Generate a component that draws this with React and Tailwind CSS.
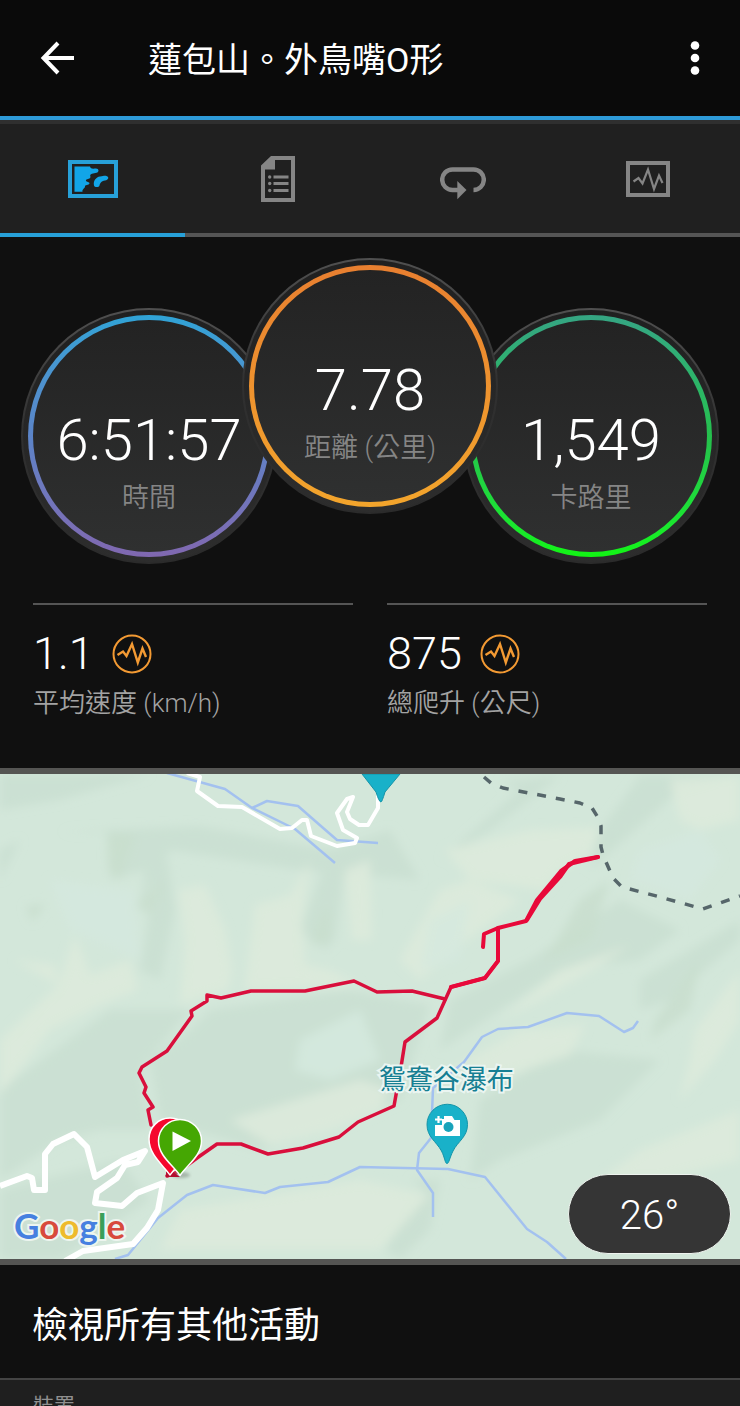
import React from "react";

const PULSE = "7.5,20.5 12.5,17 16.5,22.5 22,8.5 28,28 33,14.5 36.5,22";

function MapIcon() {
  return (
    <svg width="50" height="38" viewBox="0 0 50 38" aria-hidden="true">
      <rect x="2" y="2" width="46" height="34" fill="none" stroke="#27a0d8" strokeWidth="4" />
      <path
        fill="#12a5e8"
        d="M6.5 6.5H22C22.500 9.500 26 8.500 28 8.500C31 8.500 31.500 12 28.500 12.800L24 13.800C20.500 15 23.500 16.500 22 18C20.500 19.500 17.500 19 18 20.800C18.500 22.500 21.500 21.500 21.500 23.500C21 25.500 16.500 24.500 17 26.500C17 28.500 14 29 14.500 31.800H6.500Z"
      />
      <path
        fill="#12a5e8"
        d="M26 25.500C25 21 28 17 32 16.500C35 16.500 36 15.500 38.500 16C41.500 17 40.500 20 37 20.500C33 21 32 23.500 31.500 25.500C31 27.500 26.500 27.500 26 25.500Z"
      />
    </svg>
  );
}

function DocIcon() {
  return (
    <svg width="34" height="46" viewBox="0 0 34 46" fill="#858585" aria-hidden="true">
      <path fillRule="evenodd" d="M10 0H34V46H0V9.500ZM14 4V13.500H4V42H30V4Z" />
      {[21, 27.5, 34.5].map((y) => (
        <g key={y}>
          <circle cx="8.700" cy={y} r="1.700" />
          <rect x="12.500" y={y - 1.5} width="15" height="3" />
        </g>
      ))}
    </svg>
  );
}

function LoopIcon() {
  return (
    <svg width="46" height="42" viewBox="0 -9 46 42" aria-hidden="true">
      <path
        d="M18 23H12.500A10.300 10.300 0 0 1 12.500 2.400H33.500A10.300 10.300 0 0 1 33.500 23"
        fill="none"
        stroke="#858585"
        strokeWidth="4.500"
      />
      <path d="M17.300 14L26.500 23L17.300 32.300Z" fill="#858585" />
    </svg>
  );
}

function ChartIcon() {
  return (
    <svg width="44" height="36" viewBox="0 0 44 36" fill="none" stroke="#858585" aria-hidden="true">
      <rect x="2" y="2" width="40" height="32" strokeWidth="4" />
      <polyline points={PULSE} strokeWidth="2.200" />
    </svg>
  );
}

function PulseBadge() {
  return (
    <svg width="40" height="40" viewBox="0 0 40 40" fill="none" stroke="#f39a33" aria-hidden="true">
      <circle cx="20" cy="20" r="18.500" strokeWidth="2" />
      <polyline
        points="5.500,21 11,17.500 14.500,22 20,10 25.800,28.500 30.500,14.500 34,23"
        strokeWidth="2.400"
      />
    </svg>
  );
}

const TABS = [
  { label: "地圖", Icon: MapIcon },
  { label: "統計資料", Icon: DocIcon },
  { label: "圈數", Icon: LoopIcon },
  { label: "圖表", Icon: ChartIcon },
];

function Dial({ value, label, ring, className }) {
  return (
    <div
      className={`size-64 shrink-0 rounded-full bg-linear-to-b from-[#505050] from-0% via-[#303030] via-50% to-[#2b2b2b] p-[2px] ${className}`}
    >
      <div className="size-full rounded-full bg-linear-to-b from-[#202020] to-[#2d2d2d] p-[5px]">
        <div className={`size-full rounded-full bg-linear-to-b p-[5px] ${ring}`}>
          <div className="flex size-full flex-col items-center rounded-full bg-linear-to-b from-[#232323] to-[#2f3030] pt-[84px]">
            <div className="text-[58px] leading-[72px] font-light whitespace-nowrap text-white">{value}</div>
            <div className="mt-[2px] text-[27px] leading-10 font-[350] whitespace-nowrap text-[#858585]">{label}</div>
          </div>
        </div>
      </div>
    </div>
  );
}

function Stat({ value, label }) {
  return (
    <div className="border-t-2 border-[#555] pt-6">
      <div className="flex items-center gap-[18px]">
        <span className="text-[45px] leading-[50px] font-light text-white">{value}</span>
        <PulseBadge />
      </div>
      <div className="mt-1 text-[26px] leading-10 font-[350] text-[#a3a3a3]">{label}</div>
    </div>
  );
}

function Terrain() {
  return (
    <g>
      <rect x="0" y="774" width="740" height="485" fill="#d3e7da" />
      <g filter="url(#soft)">
        <g fill="#cadfd1" opacity="0.800">
          <path d="M0 774H150L60 800L0 810Z" />
          <path d="M60 832L200 826L330 850L390 830L420 880L300 870L170 850L140 910L145 870L110 880L108 832Z" />
          <path d="M0 850L20 840L0 880Z" />
          <path d="M158 860L140 970L160 980L175 910L168 860Z" />
          <path d="M325 865L300 930L325 950L335 940L345 870Z" />
          <path d="M440 860L520 790L500 782L560 776L490 830Z" />
          <path d="M590 870L680 790L730 776H640L600 830Z" />
          <path d="M210 1010L350 990L430 1005L400 1100L260 1150L160 1120L150 1060L190 1030Z" />
          <path d="M0 1090L110 1010L190 1010L140 1070L150 1130L100 1130L60 1140L0 1180Z" />
          <path d="M0 1190L120 1160L150 1200L60 1259H0Z" />
          <path d="M530 960L620 900L680 930L640 960L560 970L470 1030L440 1050L450 1000Z" />
          <path d="M480 1100L560 1050L660 1060L600 1120L500 1160L470 1180Z" />
          <path d="M640 980L740 920V940L670 1000L640 1010Z" />
          <path d="M385 1250L425 1190L410 1180L440 1180L430 1230L400 1259Z" />
        </g>
        <g fill="#c8decd" opacity="0.800">
          <path d="M107 832L135 835L120 880L108 870Z" />
          <path d="M26 906L46 904L32 922Z" />
          <path d="M135 905L165 880L150 915Z" />
          <path d="M545 960L580 900L610 880L590 940Z" />
          <path d="M320 920L328 905L330 940L310 945Z" />
          <path d="M655 1020L700 960L690 1010L650 1040Z" />
        </g>
        <g fill="#ddebdc" opacity="0.850">
          <path d="M178 890L205 885L225 930L232 970L228 990L180 1005L185 940Z" />
          <path d="M58 985L75 935L90 975L130 960L138 990L100 1005L50 1030L0 1095V1040Z" />
          <path d="M255 905L290 895L310 860L302 920L305 965L330 970L360 985L245 990Z" />
          <path d="M15 960L55 965L58 985Z" />
          <path d="M345 870L370 860L372 940L352 940Z" />
          <path d="M445 850L530 830L600 828L590 855L560 870L545 890L470 880Z" />
          <path d="M440 890L470 880L520 900L480 930L420 980L400 960Z" />
          <path d="M670 780L740 776V820L700 830L680 820Z" />
          <path d="M500 1020L560 970L630 945L600 965L540 1000Z" />
          <path d="M450 1070L520 1030L585 1025L570 1055L510 1075L470 1085Z" />
          <path d="M695 1030L740 970V1020L715 1060L680 1100L690 1060Z" />
          <path d="M180 1210L300 1190L360 1180L430 1195L380 1250L160 1250Z" />
          <path d="M230 1120L360 1080L390 1090L380 1110L330 1130L270 1145Z" />
          <path d="M640 1150L740 1110V1160L660 1180L600 1180Z" />
        </g>
        <g fill="#d5e9df" opacity="0.800">
          <path d="M50 880L135 890L140 960L70 930Z" />
          <path d="M640 850L700 830L720 860L690 900L630 880Z" />
          <path d="M300 1040L360 1010L380 1060L330 1080L295 1070Z" />
          <path d="M430 920L470 900L460 960L420 970Z" />
        </g>
      </g>
    </g>
  );
}

function TrackMap() {
  return (
    <svg
      className="block w-full"
      viewBox="0 774 740 485"
      fill="none"
      strokeLinejoin="round"
      role="img"
      aria-label="活動路線地圖"
    >
      <defs>
        <filter id="soft" x="-5%" y="-5%" width="110%" height="110%">
          <feGaussianBlur stdDeviation="5" />
        </filter>
        <filter id="shade" x="-50%" y="-100%" width="200%" height="300%">
          <feGaussianBlur stdDeviation="1.500" />
        </filter>
      </defs>
      <Terrain />
      <g stroke="#a3c1ef" strokeWidth="2.500">
        <path d="M167 773L225 789L252 808L295 829L335 863" />
        <path d="M252 808L267 801L298 806L322 827L337 840L378 843" />
        <path d="M115 1259L128 1255L158 1218L187 1195L213 1185L265 1193L280 1187L328 1182L360 1167L448 1169L485 1177L527 1229L547 1242L566 1259" />
        <path d="M638 1021L633 1028L624 1032L599 1016L567 1013L528 1027L498 1029L482 1037L464 1062L433 1088L431 1138L419 1153L417 1170L433 1193V1217" />
      </g>
      <path
        stroke="#fff"
        strokeWidth="4"
        d="M187 773L200 777L197 791L218 806L242 807L280 829L292 828L302 820H307L311 836L337 846L355 843L357 838L343 830L337 813L347 799L353 797L347 812L350 819L359 825H368L378 808V790"
      />
      <path
        stroke="#fff"
        strokeWidth="6"
        d="M0 1186L27 1176L32 1178L34 1190H45V1154L53 1144L74 1134L87 1147L95 1177L123 1160L145 1151L138 1162L125 1165L117 1178L97 1192L95 1203L122 1206L137 1193L163 1183L158 1210L147 1228L133 1244L83 1251L65 1261"
      />
      <path
        stroke="#56666a"
        strokeWidth="3.500"
        strokeDasharray="9 10"
        d="M484 777L491 783L503 788L560 799L580 803L592 808L597 816L601 826V847L603 855L613 878L622 887L660 897L703 909L740 896"
      />
      <g stroke="#d90f3c" strokeWidth="3.500" strokeLinecap="round">
        <path d="M445 999L412 991L377 992L354 981L305 991H251L221 998L207 995V1001L191 1011L192 1016L167 1051L142 1067L139 1073L146 1087L144 1093L153 1107L148 1110L151 1125" />
        <path d="M498 961L485 978L451 987L437 1018L405 1042L401 1067L394 1106L358 1122L339 1137L303 1148L268 1154L241 1144H217L197 1158L178 1172L167 1176" />
      </g>
      <g stroke="#e8093a" strokeWidth="4" strokeLinecap="round">
        <path d="M598 857L575 861L561 871L537 900L526 921L498 928L484 934L483 947" />
        <path d="M598 857L569 864L560 877L540 899L527 920" />
        <path d="M498 928V961L485 978L451 987" />
      </g>
      <path d="M362 774H400L385 792Q382 802 381 802Q379 802 376 792Z" fill="#19b1c9" stroke="#1494a8" strokeWidth="1" />
      <ellipse cx="181" cy="1175" rx="9" ry="3" fill="#879489" filter="url(#shade)" opacity="0.600" />
      <path d="M166 1170L172 1171L180 1177H166Z" fill="#b40e30" />
      <path d="M170 1175C163 1165 149 1155 149 1139A21 21 0 0 1 191 1139C191 1155 177 1165 170 1175Z" fill="#f5082d" stroke="#fff" strokeWidth="1.500" />
      <path d="M180 1175.500C173 1165 158.500 1156 158.500 1141A21.500 21.500 0 0 1 201.500 1141C201.500 1156 187 1165 180 1175.500Z" fill="#45a703" stroke="#fff" strokeWidth="1.500" />
      <path d="M172.500 1131.500L191 1141L172.500 1151Z" fill="#fff" />
      <path
        d="M447 1163.500C445 1163.500 445 1158 441.500 1151C436 1141 427 1137 427 1124.500A20 20 0 0 1 467.500 1124.500C467.500 1137 458 1141 453 1151C449.500 1158 449 1163.500 447 1163.500Z"
        fill="#19b1c9"
        stroke="#1494a8"
        strokeWidth="1"
      />
      <path d="M435 1136V1125H442V1119H444V1116H452L454.500 1120H460V1136Z" fill="#fff" />
      <circle cx="448.500" cy="1127" r="5" fill="#19a3ba" />
      <path d="M438.500 1116V1123M435 1119.500H442" stroke="#fff" strokeWidth="2.200" />
    </svg>
  );
}

function GoogleMark() {
  return (
    <div
      aria-label="Google"
      className="absolute bottom-[14px] left-[14px] font-['Lato',sans-serif] text-[35px] leading-10 font-bold [paint-order:stroke_fill] [-webkit-text-stroke:4px_#edf5ef]"
    >
      <span className="text-[#4680e0]">G</span>
      <span className="text-[#d84a3c]">o</span>
      <span className="text-[#eebb2c]">o</span>
      <span className="text-[#4680e0]">g</span>
      <span className="text-[#3a9f58]">l</span>
      <span className="text-[#d84a3c]">e</span>
    </div>
  );
}

export default function App() {
  return (
    <div className="flex h-screen flex-col bg-[#101010] font-['Roboto','Noto_Sans_CJK_TC',sans-serif] text-white">
      <header className="flex h-[120px] shrink-0 items-center border-b-4 border-[#2e9bd9] bg-[#0a0a0a] pr-[29px] pl-[38px]">
        <button type="button" aria-label="返回" className="flex size-10 items-center">
          <svg width="38" height="36" viewBox="0 0 38 36" fill="none" stroke="#fff" strokeWidth="4" aria-hidden="true">
            <path d="M36 18H6M20 3L5.500 18L20 33" />
          </svg>
        </button>
        <h1 className="ml-[70px] flex-1 pt-1 text-[34px] leading-10">蓮包山。外鳥嘴O形</h1>
        <button type="button" aria-label="更多選項" className="flex w-8 items-center justify-center">
          <svg width="10" height="36" viewBox="0 0 10 36" fill="#fff" aria-hidden="true">
            <circle cx="5" cy="5.500" r="4.300" />
            <circle cx="5" cy="18" r="4.300" />
            <circle cx="5" cy="30.500" r="4.300" />
          </svg>
        </button>
      </header>

      <nav className="grid shrink-0 grid-cols-4 border-t-4 border-[#2f2f2f] bg-[#202020]" role="tablist">
        {TABS.map(({ label, Icon }, i) => (
          <button
            key={label}
            type="button"
            role="tab"
            aria-label={label}
            aria-selected={i === 0}
            className={`flex h-[113px] items-center justify-center border-b-4 ${i === 0 ? "border-[#27a0d8]" : "border-[#555]"}`}
          >
            <Icon />
          </button>
        ))}
      </nav>

      <main className="min-h-0 flex-1 overflow-y-auto [scrollbar-width:none]">
        <section className="flex justify-center pt-[21px]">
          <Dial value="6:51:57" label="時間" ring="from-[#2fa3d6] via-[#5b84c8] to-[#8068b0]" className="mt-[50px]" />
          <Dial
            value="7.78"
            label="距離 (公里)"
            ring="from-[#e87f30] to-[#f3a52c]"
            className="z-10 -mx-[35px] mb-[50px]"
          />
          <Dial value="1,549" label="卡路里" ring="from-[#35a583] via-[#25c04c] to-[#12f512]" className="mt-[50px]" />
        </section>

        <section className="mt-[39px] grid grid-cols-2 gap-[34px] px-[33px] pb-[45px]">
          <Stat value="1.1" label="平均速度 (km/h)" />
          <Stat value="875" label="總爬升 (公尺)" />
        </section>

        <section className="relative border-y-6 border-[#555553]">
          <TrackMap />
          <div className="absolute top-[63%] left-[60.300%] -translate-x-1/2 -translate-y-1/2 text-[27px] leading-8 whitespace-nowrap text-[#167f93] [paint-order:stroke_fill] [-webkit-text-stroke:4px_#eaf5f1]">
            鴛鴦谷瀑布
          </div>
          <GoogleMark />
          <div className="absolute right-[9px] bottom-[5px] flex h-20 w-[163px] items-center justify-center rounded-full border border-[#eef3ee] bg-[#353535] pt-1 text-[40px] leading-10 font-light">
            26°
          </div>
        </section>

        <a
          href="#activities"
          className="block border-b-2 border-[#444] px-8 pt-9 pb-[27px] text-[36px] leading-[50px] text-white"
        >
          檢視所有其他活動
        </a>
        <section className="bg-[#1f1f1f] px-[33px] pt-[10px] pb-6">
          <h2 className="text-[21px] leading-8 text-[#8f8f8f]">裝置</h2>
        </section>
      </main>
    </div>
  );
}
